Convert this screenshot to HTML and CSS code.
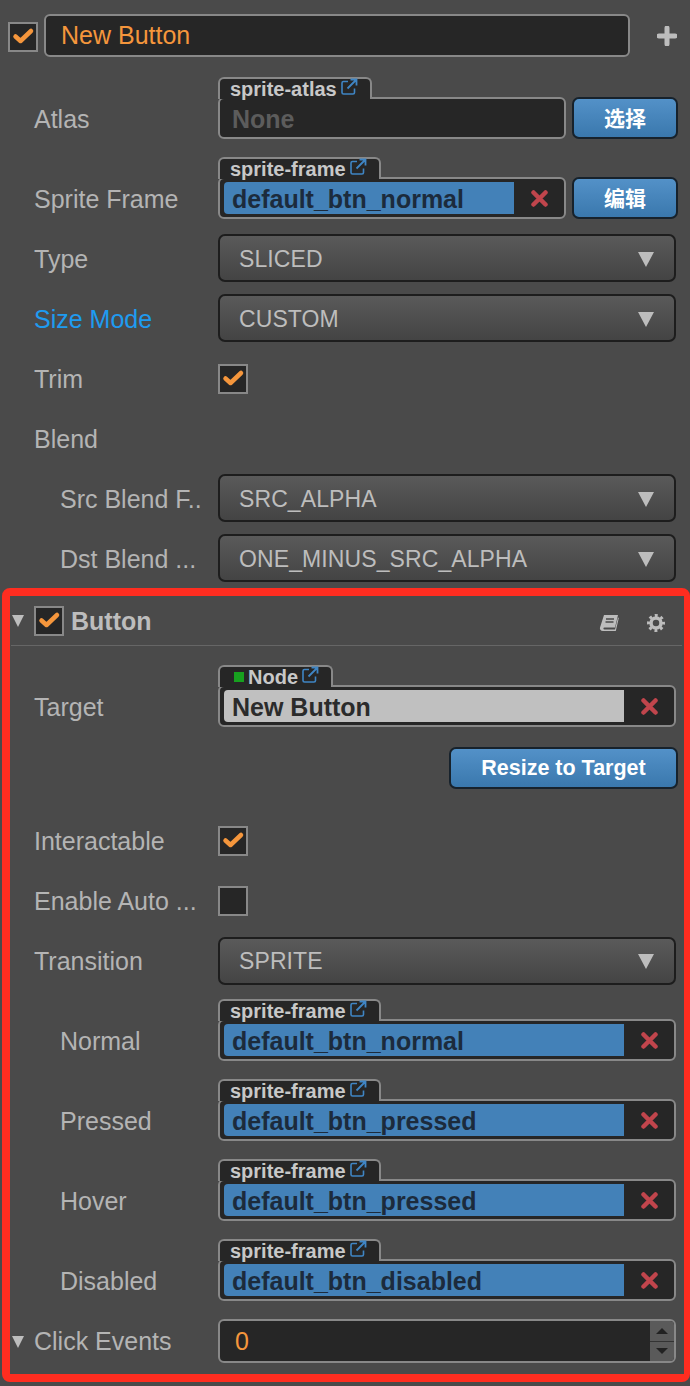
FILE: index.html
```html
<!DOCTYPE html>
<html>
<head>
<title>Inspector</title>
<link rel="stylesheet" href="styles.css">
</head>
<body>
<svg class="icon-defs">
  <symbol id="i-check" viewBox="0 0 26 26">
    <path d="M5.500 12.500l5 4.500L21 7" fill="none" stroke="#f5963c" stroke-width="4.500" stroke-linecap="round" stroke-linejoin="round"/>
  </symbol>
  <symbol id="i-link" viewBox="0 0 18 18">
    <path d="M8 3.500H3.500A1.500 1.500 0 0 0 2 5v9.500A1.500 1.500 0 0 0 3.500 16H13a1.500 1.500 0 0 0 1.500-1.500V10.500" fill="none" stroke="#3f85c4" stroke-width="1.600"/>
    <path d="M7.500 10.500L16 2M10.500 1.500h6v6" fill="none" stroke="#3f85c4" stroke-width="1.800"/>
  </symbol>
  <symbol id="i-cross" viewBox="0 0 17 17">
    <path d="M2.500 2.500l12 12M14.500 2.500l-12 12" fill="none" stroke="#c0454c" stroke-width="4.500" stroke-linecap="round"/>
  </symbol>
</svg>

<div class="node-head">
  <label class="check check-top"><svg><use href="#i-check"/></svg></label>
  <div class="name-input">New Button</div>
  <svg class="plus" viewBox="0 0 20 20"><path d="M10 2v16M2 10h16" fill="none" stroke="#bdbdbd" stroke-width="5" stroke-linecap="round"/></svg>
</div>

<div class="props">
  <div class="row row-asset">
    <div class="label">Atlas</div>
    <div class="asset">
      <div class="tab"><span>sprite-atlas</span><svg class="link"><use href="#i-link"/></svg></div>
      <div class="slot"><div class="fill fill-empty">None</div></div>
    </div>
    <button class="btn btn-side">选择</button>
  </div>

  <div class="row row-asset">
    <div class="label">Sprite Frame</div>
    <div class="asset">
      <div class="tab"><span>sprite-frame</span><svg class="link"><use href="#i-link"/></svg></div>
      <div class="slot"><div class="fill">default_btn_normal</div><div class="clear"><svg><use href="#i-cross"/></svg></div></div>
    </div>
    <button class="btn btn-side">编辑</button>
  </div>

  <div class="row">
    <div class="label">Type</div>
    <div class="select">SLICED<i class="caret"></i></div>
  </div>
  <div class="row">
    <div class="label label-active">Size Mode</div>
    <div class="select">CUSTOM<i class="caret"></i></div>
  </div>
  <div class="row">
    <div class="label">Trim</div>
    <label class="check"><svg><use href="#i-check"/></svg></label>
  </div>
  <div class="row">
    <div class="label">Blend</div>
  </div>
  <div class="row">
    <div class="label label-sub">Src Blend F..</div>
    <div class="select">SRC_ALPHA<i class="caret"></i></div>
  </div>
  <div class="row">
    <div class="label label-sub">Dst Blend ...</div>
    <div class="select">ONE_MINUS_SRC_ALPHA<i class="caret"></i></div>
  </div>
</div>

<div class="component">
  <div class="comp-head">
    <i class="fold"></i>
    <label class="check"><svg><use href="#i-check"/></svg></label>
    <div class="comp-title">Button</div>
    <svg class="book" viewBox="0 0 20 18">
      <path d="M5 1h14l-3 12.500H5.500c-1.500 0-1.500 2 0 2H16l3-12 .8.500-3 13H4C1.500 17 .5 15 1 13.500z" fill="#bdbdbd"/>
      <path d="M7 5h8M6.500 8h8" stroke="#4a4a4a" stroke-width="1.500"/>
    </svg>
    <svg class="gear" viewBox="0 0 18 18">
      <circle cx="9" cy="9" r="5" fill="none" stroke="#bdbdbd" stroke-width="3.500"/>
      <circle cx="9" cy="9" r="7.500" fill="none" stroke="#bdbdbd" stroke-width="3" stroke-dasharray="2.900 2.990" stroke-dashoffset="1.450"/>
    </svg>
  </div>

  <div class="row row-asset row-target">
    <div class="label">Target</div>
    <div class="asset">
      <div class="tab"><b class="dot"></b><span>Node</span><svg class="link"><use href="#i-link"/></svg></div>
      <div class="slot"><div class="fill fill-node">New Button</div><div class="clear"><svg><use href="#i-cross"/></svg></div></div>
    </div>
  </div>
  <div class="row-action">
    <button class="btn btn-wide">Resize to Target</button>
  </div>

  <div class="row">
    <div class="label">Interactable</div>
    <label class="check"><svg><use href="#i-check"/></svg></label>
  </div>
  <div class="row">
    <div class="label">Enable Auto ...</div>
    <label class="check"></label>
  </div>
  <div class="row">
    <div class="label">Transition</div>
    <div class="select">SPRITE<i class="caret"></i></div>
  </div>

  <div class="row row-asset">
    <div class="label label-sub">Normal</div>
    <div class="asset">
      <div class="tab"><span>sprite-frame</span><svg class="link"><use href="#i-link"/></svg></div>
      <div class="slot"><div class="fill">default_btn_normal</div><div class="clear"><svg><use href="#i-cross"/></svg></div></div>
    </div>
  </div>
  <div class="row row-asset">
    <div class="label label-sub">Pressed</div>
    <div class="asset">
      <div class="tab"><span>sprite-frame</span><svg class="link"><use href="#i-link"/></svg></div>
      <div class="slot"><div class="fill">default_btn_pressed</div><div class="clear"><svg><use href="#i-cross"/></svg></div></div>
    </div>
  </div>
  <div class="row row-asset">
    <div class="label label-sub">Hover</div>
    <div class="asset">
      <div class="tab"><span>sprite-frame</span><svg class="link"><use href="#i-link"/></svg></div>
      <div class="slot"><div class="fill">default_btn_pressed</div><div class="clear"><svg><use href="#i-cross"/></svg></div></div>
    </div>
  </div>
  <div class="row row-asset">
    <div class="label label-sub">Disabled</div>
    <div class="asset">
      <div class="tab"><span>sprite-frame</span><svg class="link"><use href="#i-link"/></svg></div>
      <div class="slot"><div class="fill">default_btn_disabled</div><div class="clear"><svg><use href="#i-cross"/></svg></div></div>
    </div>
  </div>

  <div class="row">
    <div class="label"><i class="fold fold-label"></i>Click Events</div>
    <div class="number">
      <div class="number-value">0</div>
      <div class="spin">
        <div class="spin-btn"><i class="spin-up"></i></div>
        <div class="spin-btn"><i class="spin-down"></i></div>
      </div>
    </div>
  </div>
</div>
</body>
</html>
```

FILE: styles.css
```css
body {
    background-color: #4a4a4a;
    color: #b4b4b4;
    font-family: "Liberation Sans", Arial, "Noto Sans CJK SC", sans-serif;
    font-size: 25px;
    margin: 0;
    padding: 0;
}

.icon-defs {
    display: none;
}

/* node header */
.node-head {
    display: flex;
    align-items: center;
    height: 65px;
    padding: 3px 13px 0 8px;
}

.name-input {
    flex: 1;
    box-sizing: border-box;
    height: 43px;
    line-height: 39px;
    margin: 0 27px 0 6px;
    padding-left: 15px;
    background-color: #262626;
    border: 2px solid #888;
    border-radius: 6px;
    color: #f5963c;
}

.plus {
    width: 20px;
    height: 20px;
}

.check-top {
    margin-top: 3px;
}

/* rows */
.row {
    display: flex;
    align-items: center;
    height: 60px;
    padding: 0 14px 0 34px;
}

.row-asset {
    height: 80px;
    box-sizing: border-box;
    align-items: flex-end;
    padding-top: 9px;
    padding-bottom: 9px;
}

.label {
    flex: 0 0 184px;
    box-sizing: border-box;
    white-space: nowrap;
}

.row-asset .label {
    height: 42px;
    line-height: 44px;
}

.label-sub {
    padding-left: 26px;
}

.label-active {
    color: #1e9bf0;
}

/* top rows sit a pixel lower than the box centre */
.props .row:not(.row-asset) .label,
.props .select {
    padding-top: 2px;
}

.props .check {
    margin-top: 2px;
}

/* asset picker */
.asset {
    flex: 1;
    display: flex;
    flex-direction: column;
    align-items: flex-start;
    min-width: 0;
}

.tab {
    position: relative;
    display: flex;
    align-items: center;
    box-sizing: border-box;
    height: 22px;
    margin-bottom: -2px;
    padding: 0 12px 0 10px;
    background-color: #262626;
    border: 2px solid #888;
    border-bottom: 0;
    border-radius: 6px 6px 0 0;
    color: #c8c8c8;
    font-size: 20px;
    font-weight: bold;
}

.link {
    width: 18px;
    height: 18px;
    margin: -4px 0 0 3px;
}

.dot {
    width: 10px;
    height: 10px;
    margin: 0 4px 0 4px;
    background-color: #17a01f;
}

.slot {
    align-self: stretch;
    display: flex;
    box-sizing: border-box;
    height: 42px;
    padding: 3px 0 3px 4px;
    background-color: #262626;
    border: 2px solid #888;
    border-radius: 6px;
}

.fill {
    flex: 1;
    min-width: 0;
    padding-left: 8px;
    background-color: #4381b8;
    border-radius: 4px 0 0 4px;
    color: #1c2b3c;
    font-weight: bold;
    line-height: 34px;
}

.fill-empty {
    background-color: transparent;
    color: #5c5c5c;
}

.fill-node {
    background-color: #c0c0c0;
    color: #2b2b2b;
}

.clear {
    flex: 0 0 50px;
    display: flex;
    align-items: center;
    justify-content: center;
}

.clear svg {
    width: 17px;
    height: 17px;
}

/* buttons */
.btn {
    box-sizing: border-box;
    height: 42px;
    padding: 0;
    background: linear-gradient(#5391c8, #3a78ad);
    border: 2px solid #17222c;
    border-radius: 7px;
    color: #fff;
    font-family: inherit;
    font-size: 21px;
    font-weight: bold;
}

.btn-side {
    flex: 0 0 106px;
    margin: 0 -2px 0 6px;
    padding-bottom: 2px;
}

.btn-wide {
    width: 229px;
    font-size: 21.5px;
}

/* select */
.select {
    flex: 1;
    display: flex;
    align-items: center;
    justify-content: space-between;
    box-sizing: border-box;
    height: 48px;
    padding: 0 20px 0 19px;
    background: linear-gradient(#5a5a5a, #444);
    border: 2px solid #1d1d1d;
    border-radius: 7px;
    color: #bdbdbd;
    font-size: 23px;
    letter-spacing: .1px;
}

.caret {
    width: 0;
    height: 0;
    border-left: 8px solid transparent;
    border-right: 8px solid transparent;
    border-top: 15px solid #bdbdbd;
}

/* checkbox */
.check {
    display: block;
    flex: 0 0 30px;
    box-sizing: border-box;
    width: 30px;
    height: 30px;
    background-color: #262626;
    border: 2px solid #888;
}

.check svg {
    display: block;
    width: 26px;
    height: 26px;
}

/* Button component, red outline is part of the picture */
.component {
    margin: 0 0 4px 2px;
    border: solid #ff2d20;
    border-width: 8px 6px 8px 8px;
    border-radius: 8px;
    padding-bottom: 3px;
}

.component .row {
    padding-left: 24px;
    padding-right: 8px;
}

.component .row-asset {
    padding-top: 8px;
    padding-bottom: 10px;
}

.comp-head {
    display: flex;
    align-items: center;
    box-sizing: border-box;
    height: 50px;
    margin: 0 2px 0 1px;
    padding: 1px 17px 0 1px;
    border-bottom: 1px solid #666;
}

.comp-head .check {
    margin-left: 10px;
}

.comp-title {
    flex: 1;
    margin-left: 7px;
    color: #bdbdbd;
    font-weight: bold;
}

.fold {
    display: block;
    width: 0;
    height: 0;
    border-left: 6px solid transparent;
    border-right: 6px solid transparent;
    border-top: 12px solid #bdbdbd;
}

.fold-label {
    display: inline-block;
    margin: 0 10px 0 -22px;
    vertical-align: 2px;
}

.book {
    width: 20px;
    height: 18px;
    margin: 3px 28px 0 0;
}

.gear {
    width: 18px;
    height: 18px;
    margin-top: 3px;
}

.component .row-target {
    height: 81px;
    padding-top: 19px;
    padding-bottom: 0;
}

.row-action {
    display: flex;
    justify-content: flex-end;
    padding: 20px 6px 22px 0;
}

/* number input */
.number {
    flex: 1;
    display: flex;
    box-sizing: border-box;
    height: 44px;
    background-color: #262626;
    border: 2px solid #888;
    border-radius: 6px;
}

.number-value {
    flex: 1;
    padding-left: 15px;
    color: #f5963c;
    line-height: 40px;
}

.spin {
    flex: 0 0 24px;
    display: flex;
    flex-direction: column;
    background-color: #5a5a5a;
    border-radius: 0 4px 4px 0;
}

.spin-btn {
    flex: 1;
    display: flex;
    align-items: center;
    justify-content: center;
}

.spin-btn + .spin-btn {
    border-top: 1px solid #333;
}

.spin-up,
.spin-down {
    width: 0;
    height: 0;
    border-left: 6px solid transparent;
    border-right: 6px solid transparent;
}

.spin-up {
    border-bottom: 6px solid #222;
}

.spin-down {
    border-top: 6px solid #222;
}
```
